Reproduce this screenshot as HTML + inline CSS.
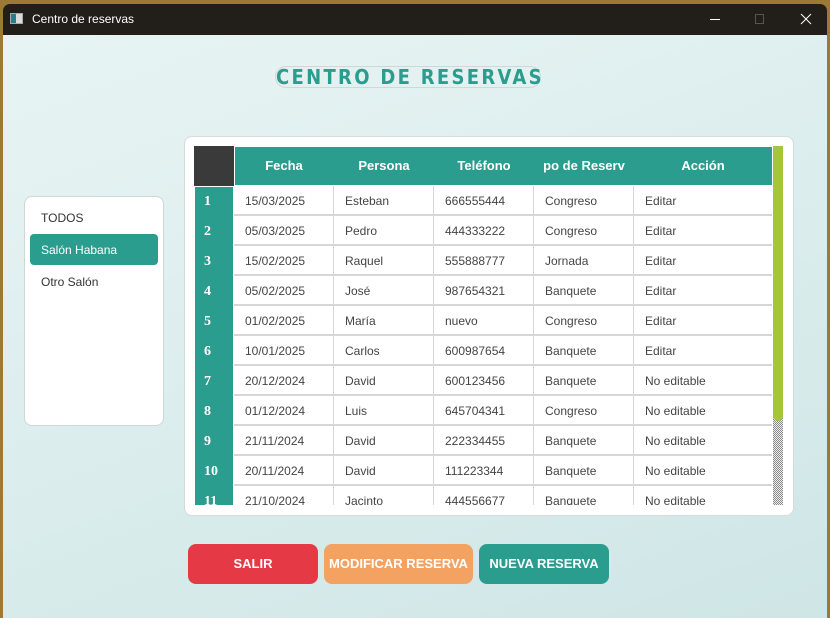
<!DOCTYPE html>
<html><head><meta charset="utf-8"><style>
*{margin:0;padding:0;box-sizing:border-box}
body{width:830px;height:618px;overflow:hidden;background:#9c7a36;font-family:"Liberation Sans",sans-serif;position:relative}
.tb{position:absolute;left:3px;top:4px;width:824px;height:31px;background:#221f1a;border-radius:7px 7px 0 0;color:#fff;font-size:12px}
.main{position:absolute;left:3px;top:35px;width:824px;height:583px;background:linear-gradient(160deg,#e8f4f4,#cfe6e6)}
.title{position:absolute;left:275px;top:66px;width:266px;height:22px;border:1px solid #cfd8d8;border-radius:11px;color:#2a9d8f;font-weight:bold;font-family:"DejaVu Sans Condensed","DejaVu Sans",sans-serif;font-size:20px;letter-spacing:2.3px;text-align:center;line-height:21px;background:#e4f1f1;white-space:nowrap}
.left{position:absolute;left:24px;top:196px;width:140px;height:230px;background:#fff;border:1px solid #cfd6d6;border-radius:8px}
.left div{position:absolute;left:16px;font-size:12px;color:#333}
.card{position:absolute;left:184px;top:136px;width:610px;height:380px;background:#fff;border:1px solid #d5dada;border-radius:8px}
.clip{position:absolute;left:194px;top:146px;width:578px;height:359px;overflow:hidden}
.c{position:absolute;font-size:12px;color:#444}
.hd{position:absolute;top:1px;height:38px;line-height:38px;color:#fff;font-weight:bold;font-size:13px;text-align:center;overflow:hidden;white-space:nowrap}
.rn{position:absolute;left:1px;width:38px;color:#fff;font-weight:bold;font-family:"Liberation Serif",serif;font-size:14px;padding-left:9px}
.btn{position:absolute;top:544px;height:40px;border-radius:8px;color:#fff;font-weight:bold;font-size:13px;text-align:center;line-height:40px}
</style></head><body>
<div class="tb"><div style="position:absolute;left:7px;top:9px;width:13px;height:11px;background:#ddd;border:1px solid #aaa"><div style="width:5px;height:9px;background:#2a7d8f"></div></div><span style="position:absolute;left:29px;top:8px">Centro de reservas</span>
<div style="position:absolute;left:707px;top:15px;width:10px;height:1px;background:#fff"></div>
<div style="position:absolute;left:752px;top:10px;width:9px;height:10px;border:1px solid #555"></div>
<svg style="position:absolute;left:797px;top:9px" width="12" height="12"><path d="M1 1L11 11M11 1L1 11" stroke="#fff" stroke-width="1"/></svg></div>
<div class="main"></div>
<div class="title">CENTRO DE RESERVAS</div>
<div class="left"><div style="top:14px">TODOS</div>
<div style="left:5px;top:37px;width:128px;height:31px;background:#2a9d8f;border-radius:4px"></div>
<div style="top:46px;color:#fff">Salón Habana</div>
<div style="top:78px">Otro Salón</div></div>
<div class="card"></div>
<div class="clip">
<div style="position:absolute;left:0;top:0;width:40px;height:40px;background:#3a3a3a"></div>
<div style="position:absolute;left:41px;top:1px;width:537px;height:38px;background:#2a9d8f"></div>
<div class="hd" style="left:40px;width:100px">Fecha</div>
<div class="hd" style="left:140px;width:100px">Persona</div>
<div class="hd" style="left:240px;width:100px">Teléfono</div>
<div class="hd" style="left:340px;width:100px">po de Reserv</div>
<div class="hd" style="left:440px;width:138px">Acción</div>
<div style="position:absolute;left:1px;top:41px;width:38px;height:330px;background:#2a9d8f"></div>
<div id="rows"></div>
</div>
<div style="position:absolute;left:773px;top:146px;width:10px;height:359px;background:repeating-conic-gradient(#888 0 25%,#eee 0 50%) 0 0/2px 2px"></div>
<div style="position:absolute;left:773px;top:146px;width:10px;height:275px;background:#a5c63b;border-radius:0 0 5px 5px"></div>
<div class="btn" style="left:188px;width:130px;background:#e63946">SALIR</div>
<div class="btn" style="left:324px;width:149px;background:#f4a261">MODIFICAR RESERVA</div>
<div class="btn" style="left:479px;width:130px;background:#2a9d8f">NUEVA RESERVA</div>
<script>
var d=[["15/03/2025","Esteban","666555444","Congreso","Editar"],["05/03/2025","Pedro","444333222","Congreso","Editar"],["15/02/2025","Raquel","555888777","Jornada","Editar"],["05/02/2025","José","987654321","Banquete","Editar"],["01/02/2025","María","nuevo","Congreso","Editar"],["10/01/2025","Carlos","600987654","Banquete","Editar"],["20/12/2024","David","600123456","Banquete","No editable"],["01/12/2024","Luis","645704341","Congreso","No editable"],["21/11/2024","David","222334455","Banquete","No editable"],["20/11/2024","David","111223344","Banquete","No editable"],["21/10/2024","Jacinto","444556677","Banquete","No editable"]];
var h="",L=[40,140,240,340,440];
d.forEach(function(r,i){var t=40+i*30;
h+='<div style="position:absolute;left:40px;top:'+(t+28)+'px;width:538px;height:2px;background:#d6d6d6"></div>';
h+='<div class="rn" style="top:'+(t+8)+'px">'+(i+1)+'</div>';
r.forEach(function(v,j){h+='<div class="c" style="left:'+(L[j]+11)+'px;top:'+(t+8)+'px">'+v+'</div>';});
});
[139,239,339,439].forEach(function(x){h+='<div style="position:absolute;left:'+x+'px;top:40px;width:1px;height:330px;background:#d6d6d6"></div>'});
document.getElementById('rows').innerHTML=h;
</script>
</body></html>
